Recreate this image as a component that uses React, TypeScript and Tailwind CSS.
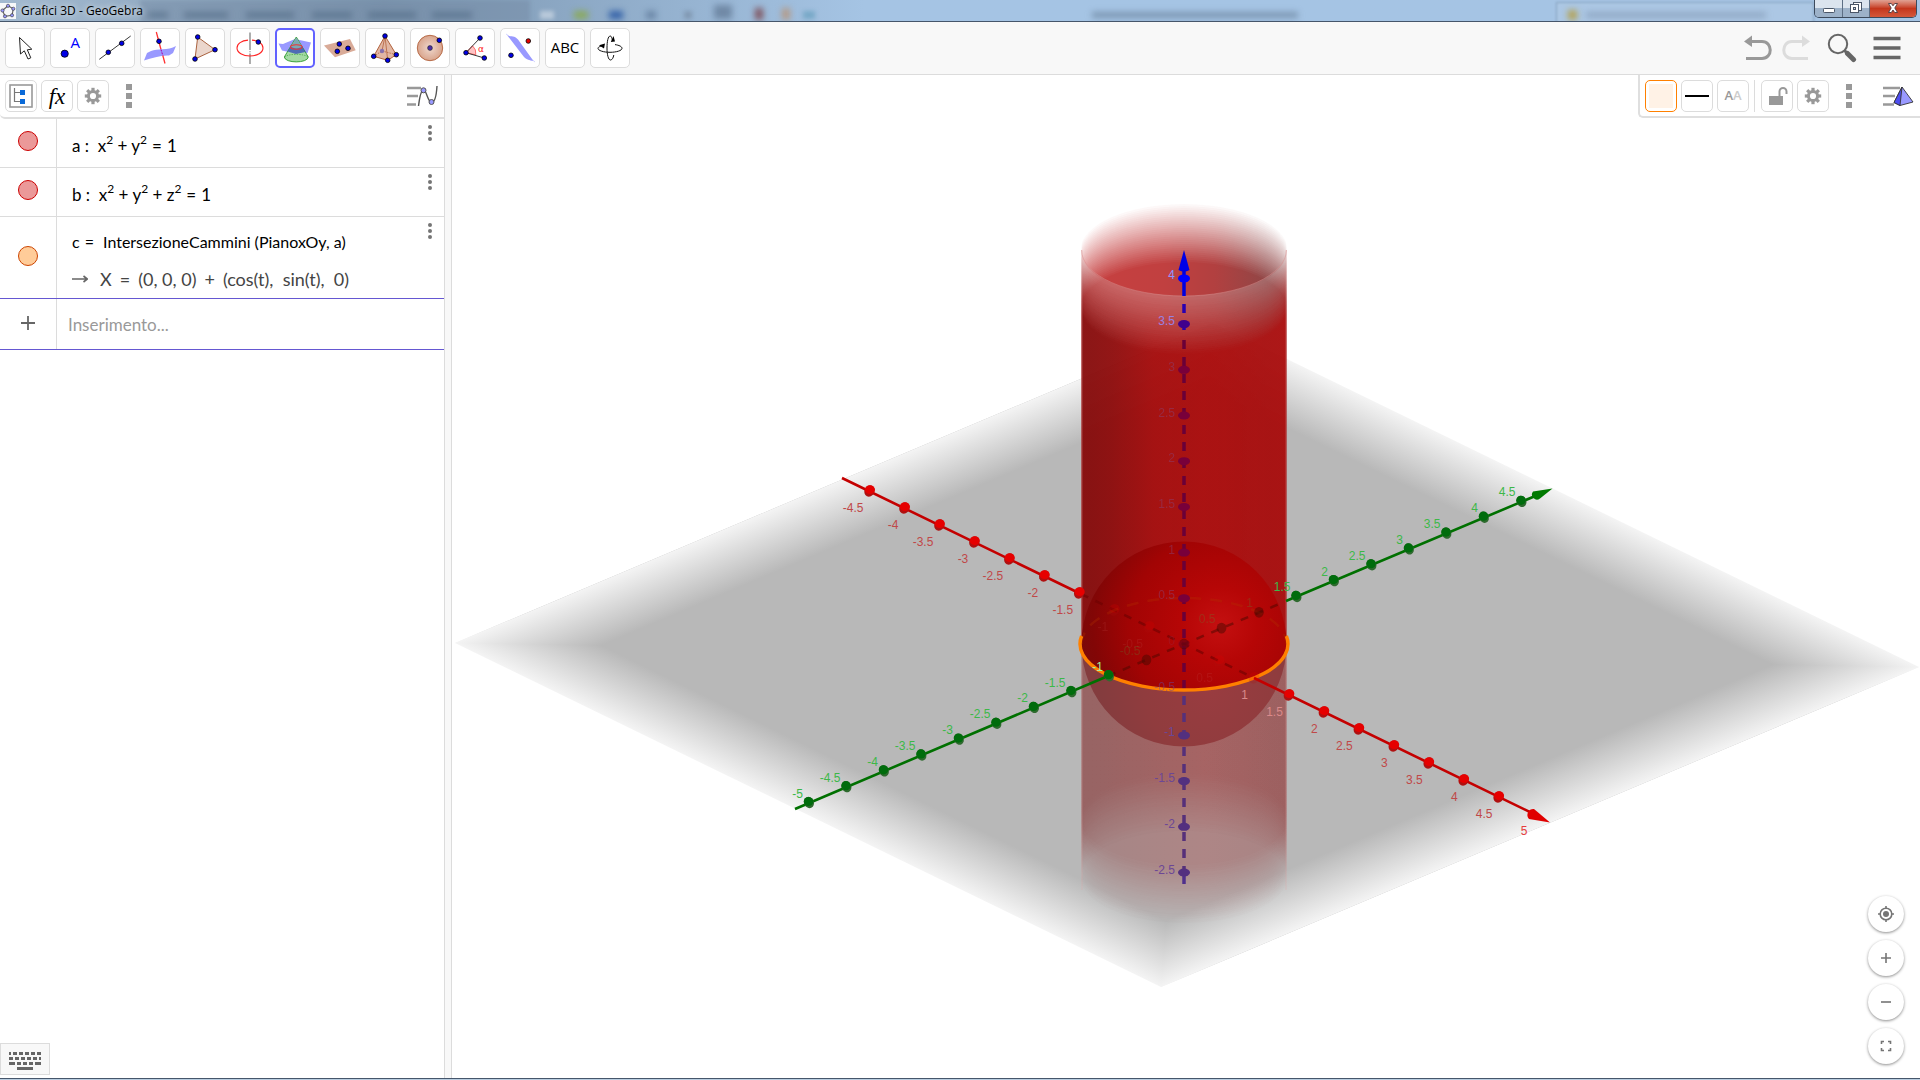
import type { ReactNode } from 'react';

const BLUE = '#0000e6';

function Dot({ x, y, fill = BLUE }: { x: number; y: number; fill?: string }) {
  return <circle cx={x} cy={y} r="2.3" fill={fill} stroke="#000" strokeWidth="0.8" />;
}

const tools: { name: string; icon: ReactNode; active?: boolean }[] = [
  {
    name: 'Muovi',
    icon: (
      <path
        d="M14.5 9.5 L15.5 26 L19.3 22.8 L23 31 L25.8 29.8 L22.3 21.8 L26.8 21.2 Z"
        fill="#fff"
        stroke="#222"
        strokeWidth="1"
      />
    ),
  },
  {
    name: 'Punto',
    icon: (
      <>
        <circle cx="14.7" cy="25.7" r="3.6" fill={BLUE} stroke="#000" strokeWidth="0.8" />
        <text x="20.5" y="20" fontSize="15" fill="#0000ff" fontFamily="Open Sans, sans-serif">
          A
        </text>
      </>
    ),
  },
  {
    name: 'Retta',
    icon: (
      <>
        <path d="M4.3 31.3 L35.7 8" stroke="#222" strokeWidth="0.9" />
        <Dot x={13.3} y={24.3} />
        <Dot x={26.7} y={15.3} />
      </>
    ),
  },
  {
    name: 'Retta perpendicolare',
    icon: (
      <>
        <path d="M16.3 4 L21 21.5" stroke="#f33" strokeWidth="1.3" />
        <path d="M11 23 C17 20 28 23 36 18 L33 25 L29 27.5 C21 27 12 30 4 32.5 L7 25 Z" fill="#9999ff" />
        <path d="M21 21.5 L22.8 27.5" stroke="#a0a" strokeWidth="1" strokeDasharray="2 1" />
        <path d="M22.8 27.5 L25 35.5" stroke="#f33" strokeWidth="1.3" />
        <Dot x={19} y={13.3} />
      </>
    ),
  },
  {
    name: 'Poligono',
    icon: (
      <>
        <path d="M12.7 9 L30 21.7 L10 31 Z" fill="#ebd6cc" stroke="#a0522d" strokeWidth="0.9" />
        <Dot x={12.7} y={9} />
        <Dot x={30} y={21.7} />
        <Dot x={10} y={31} />
      </>
    ),
  },
  {
    name: 'Circonferenza',
    icon: (
      <>
        <path d="M20 4.5 V19" stroke="#999" strokeWidth="1.6" />
        <path d="M20 19 V28" stroke="#999" strokeWidth="1.6" strokeDasharray="3 1.2 1 1.2" />
        <path d="M20 28 V36" stroke="#999" strokeWidth="1.6" />
        <path d="M22 12.1 C28.5 12.6 33 15.8 33 20 C33 24.6 27.2 28 20 28 C12.8 28 7 24.6 7 20 C7 15.8 11.5 12.6 18 12.1" stroke="#f22" strokeWidth="1.1" fill="none" />
        <Dot x={28.3} y={14} />
      </>
    ),
  },
  {
    name: 'Intersezione di due superfici',
    active: true,
    icon: (
      <>
        <path d="M3.5 15.5 L8 16 L20 11 L36 14.5 L32.5 25 L22 26 L7 22.5 Z" fill="#9999ff" />
        <path d="M21.3 9 L9.3 29 C10 35.5 32.6 35.5 33.3 29 Z" fill="#a4dba4" stroke="#2f9a2f" strokeWidth="0.9" />
        <path d="M16 18 L12.5 23.5 L21 26 L30.5 24 L26.8 18 Z" fill="#3f58b8" opacity="0.85" />
        <path d="M21.3 9.5 L15.8 18.6 C18 21 25 21 26.9 18.6 Z" fill="#7ba8b4" />
        <path d="M9.6 29 C13 25.5 29.6 25.5 33 29" stroke="#2f9a2f" strokeWidth="0.6" strokeDasharray="1.5 1" fill="none" />
        <ellipse cx="21.3" cy="19" rx="5.8" ry="2.2" stroke="#e33" strokeWidth="1.1" fill="none" />
      </>
    ),
  },
  {
    name: 'Piano per tre punti',
    icon: (
      <>
        <path d="M4 17.5 L30 11 L35.7 22.3 L15 29.3 Z" fill="#d9ab98" />
        <Dot x={19.3} y={16} />
        <Dot x={28} y={20.3} />
        <Dot x={17.3} y={23.3} />
      </>
    ),
  },
  {
    name: 'Piramide',
    icon: (
      <>
        <path d="M20 8 L8.7 28.3 L22.7 32.3 L31.3 26.7 Z" fill="#e2b7a3" stroke="#b2623d" strokeWidth="1" />
        <path d="M20 8 L22.7 32.3 M20 8 L17 23" stroke="#b2623d" strokeWidth="0.8" />
        <path d="M8.7 28.3 L17 23 L31.3 26.7" stroke="#b2623d" strokeWidth="0.8" strokeDasharray="1.5 1" fill="none" />
        <circle cx="17" cy="23" r="2.2" fill="#8770ad" />
        <Dot x={20} y={8} />
        <Dot x={8.7} y={28.3} />
        <Dot x={22.7} y={32.3} />
        <Dot x={31.3} y={26.7} />
      </>
    ),
  },
  {
    name: 'Sfera',
    icon: (
      <>
        <circle cx="20" cy="20" r="12.7" fill="url(#ball)" stroke="#b2623d" strokeWidth="0.9" />
        <circle cx="20" cy="20" r="2.4" fill="#4b2fa8" stroke="#222" strokeWidth="0.6" />
        <Dot x={29.3} y={12.3} />
      </>
    ),
  },
  {
    name: 'Angolo',
    icon: (
      <>
        <path d="M11 24.7 L17.5 17.8 A10 10 0 0 1 20.8 26.8 Z" fill="#ffc4c4" stroke="#f55" strokeWidth="0.8" />
        <path d="M25 10 L11 24.7 L29.3 30" stroke="#222" strokeWidth="0.9" fill="none" />
        <text x="23" y="24" fontSize="9" fill="#f22" fontFamily="DejaVu Sans, sans-serif">
          α
        </text>
        <Dot x={25} y={10} />
        <Dot x={11} y={24.7} />
        <Dot x={29.3} y={30} />
      </>
    ),
  },
  {
    name: 'Simmetria',
    icon: (
      <>
        <path d="M7 7 C11 9.5 14 7 18 11.5 L33.5 33 C29 32 27 32 24 29 Z" fill="#9999ff" />
        <path d="M6 6 L9 8 M32 31.5 L35 34" stroke="#c9c9ff" strokeWidth="0.8" />
        <Dot x={11} y={27.3} />
        <Dot x={28.3} y={13} fill="#e60000" />
      </>
    ),
  },
  {
    name: 'Testo',
    icon: (
      <text x="20" y="25.3" fontSize="15" textAnchor="middle" fill="#000" fontFamily="Open Sans, sans-serif">
        ABC
      </text>
    ),
  },
  {
    name: 'Ruota vista grafica 3D',
    icon: (
      <>
        <path d="M13.5 17.5 C9.5 18.3 8 19.3 8 20.3 C8 22.6 13.5 24.3 20 24.3 C26.5 24.3 32 22.6 32 20.3 C32 18.5 29 17.2 25 16.6" stroke="#111" strokeWidth="1" fill="none" />
        <path d="M22.5 13 C22 9.5 21.2 8 20.3 8 C18 8 17 13.5 17 20 C17 26.5 18.3 32 20.5 32 C22 32 23.3 30 23.8 27" stroke="#111" strokeWidth="1" fill="none" />
        <path d="M9 17.2 L15 15.5 L14 20.5 Z M20.8 14 L25 13.5 L23.5 8 Z" fill="#000" />
      </>
    ),
  },
];

function TitleBar() {
  const ghosts = [
    'left-[148px] w-[20px]',
    'left-[184px] w-[44px]',
    'left-[246px] w-[48px]',
    'left-[312px] w-[40px]',
    'left-[368px] w-[48px]',
    'left-[432px] w-[40px]',
  ];
  return (
    <header className="relative flex h-[22px] shrink-0 items-start overflow-hidden border-b border-[#46566b] bg-linear-to-r from-[#a3bad0] from-0% via-[#7d97b1] via-20% to-[#a5c4e4] to-45%">
      <div className="absolute inset-0" aria-hidden="true">
        <div className="absolute top-0 left-[140px] h-[22px] w-[390px] bg-[#738aa3]/50 blur-[2px]" />
        {ghosts.map((g) => (
          <div key={g} className={`absolute top-[12px] h-[6px] bg-[#4d6581]/60 blur-[3px] ${g}`} />
        ))}
        <div className="absolute top-[11px] left-[540px] h-[8px] w-[14px] bg-white/40 blur-[2px]" />
        <div className="absolute top-[11px] left-[574px] h-[8px] w-[14px] bg-[#8aa95c] blur-[3px]" />
        <div className="absolute top-[11px] left-[609px] h-[8px] w-[14px] bg-[#3462a8] blur-[3px]" />
        <div className="absolute top-[11px] left-[646px] h-[8px] w-[10px] bg-[#6a86a6] blur-[3px]" />
        <div className="absolute top-[11px] left-[684px] h-[8px] w-[8px] bg-[#8199b3] blur-[2px]" />
        <div className="absolute top-[5px] left-[714px] h-[14px] w-[18px] bg-[#7089a6] blur-[3px]" />
        <div className="absolute top-[8px] left-[755px] h-[12px] w-[8px] bg-[#7f5560] blur-[3px]" />
        <div className="absolute top-[8px] left-[782px] h-[12px] w-[8px] bg-[#b59a86] blur-[3px]" />
        <div className="absolute top-[11px] left-[803px] h-[8px] w-[12px] bg-[#79a9c8] blur-[2px]" />
        <div className="absolute top-[12px] left-[1092px] h-[6px] w-[206px] bg-[#5f7690]/60 blur-[3px]" />
        <div className="absolute top-[2px] left-[1556px] h-[30px] w-[258px] border border-[#7691ae]/70 bg-[#b6cde4]/40 blur-[1px]" />
        <div className="absolute top-[10px] left-[1568px] h-[10px] w-[9px] bg-[#b3a253] blur-[3px]" />
        <div className="absolute top-[12px] left-[1586px] h-[6px] w-[180px] bg-[#7d95b0]/60 blur-[3px]" />
      </div>
      <h1 className="relative flex items-center gap-[5px] pt-[2px] font-['Open_Sans',sans-serif] text-[12px] leading-[18px] text-black [text-shadow:0_0_6px_#fff]">
        <svg className="size-4 bg-white/90" viewBox="0 0 16 16" aria-hidden="true">
          <path d="M8 2.8 L13.3 5.8 L12 12.3 L5 13.3 L2.5 7.5 Z" fill="none" stroke="#666" strokeWidth="1.2" />
          {[[8, 2.8], [13.3, 5.8], [12, 12.3], [5, 13.3], [2.5, 7.5]].map(([x, y]) => (
            <circle key={x} cx={x} cy={y} r="1.6" fill="#9999ff" stroke="#333" strokeWidth="0.6" />
          ))}
        </svg>
        Grafici 3D - GeoGebra
      </h1>
      <div className="relative mr-[3px] ml-auto flex h-[18px] overflow-hidden rounded-b-[5px] border border-t-0 border-[#3c4a5c]">
        <button aria-label="Riduci a icona" className="flex w-[28px] justify-center border-r border-[#5d6f85] bg-linear-to-b from-[#dbe4ee] from-45% to-[#9db2c9] to-50%">
          <svg className="h-[17px] w-[14px]" viewBox="0 0 14 17">
            <rect x="1.5" y="8.5" width="11" height="4" rx="0.8" fill="#fff" stroke="#4a5668" />
          </svg>
        </button>
        <button aria-label="Ripristina" className="flex w-[27px] justify-center border-r border-[#5d6f85] bg-linear-to-b from-[#dbe4ee] from-45% to-[#9db2c9] to-50%">
          <svg className="h-[17px] w-[14px]" viewBox="0 0 14 17">
            <rect x="4.5" y="2.5" width="8" height="8" fill="#fff" stroke="#4a5668" />
            <rect x="1.5" y="4.5" width="8" height="8" fill="#fff" stroke="#4a5668" />
            <rect x="4.5" y="7.5" width="2" height="2" fill="#cdd8e4" stroke="#4a5668" />
          </svg>
        </button>
        <button aria-label="Chiudi" className="flex w-[46px] justify-center bg-linear-to-b from-[#e0a193] from-0% via-[#c4361c] via-50% to-[#d4573a]">
          <svg className="h-[17px] w-[14px]" viewBox="0 0 14 17">
            <path d="M2.5 3.5 H5.3 L7 5.8 L8.7 3.5 H11.5 L8.8 8 L11.5 12.5 H8.7 L7 10 L5.3 12.5 H2.5 L5.2 8 Z" fill="#fff" stroke="#4d3a40" strokeWidth="0.9" />
          </svg>
        </button>
      </div>
    </header>
  );
}

function Toolbar() {
  return (
    <nav className="flex h-[53px] shrink-0 items-center border-b border-[#dcdcdc] bg-[#f8f8f8] px-[5px]">
      <div className="flex gap-[5px]">
        {tools.map((t) => (
          <button
            key={t.name}
            aria-label={t.name}
            className={`flex size-10 items-center justify-center rounded-[5px] bg-white ${
              t.active ? 'border-2 border-[#6161ff]' : 'border border-[#dcdcdc]'
            }`}
          >
            <svg className="size-[38px] shrink-0" viewBox="1 1 38 38">
              {t.icon}
            </svg>
          </button>
        ))}
      </div>
      <div className="mr-[14px] ml-auto flex items-center gap-[8px]">
        <button aria-label="Annulla">
          <svg className="h-[28px] w-[30px]" viewBox="0 0 30 28" fill="none">
            <path d="M8 7.5 H19 C30 7.5 30 24.5 19 24.5 H3" stroke="#999" strokeWidth="3" />
            <path d="M1 7.5 L9 1.5 V13 Z" fill="#999" />
          </svg>
        </button>
        <button aria-label="Ripeti">
          <svg className="h-[28px] w-[30px]" viewBox="0 0 30 28" fill="none">
            <path d="M21 7.5 H11 C0 7.5 0 24.5 11 24.5 H27" stroke="#dcdcdc" strokeWidth="3" />
            <path d="M29 7.5 L21 1.5 V13 Z" fill="#dcdcdc" />
          </svg>
        </button>
        <button aria-label="Cerca" className="ml-2">
          <svg className="size-[30px]" viewBox="0 0 30 30" fill="none">
            <circle cx="11" cy="11" r="9.2" stroke="#666" strokeWidth="2" />
            <path d="M17.5 17.5 L21 21" stroke="#666" strokeWidth="3" />
            <path d="M20.5 20.5 L26.5 26.5" stroke="#666" strokeWidth="5" strokeLinecap="round" />
          </svg>
        </button>
        <button aria-label="Menu" className="ml-2">
          <svg className="h-[24px] w-[28px]" viewBox="0 0 28 24">
            <path d="M0.5 2.5 H27.5 M0.5 12 H27.5 M0.5 21.5 H27.5" stroke="#666" strokeWidth="3.4" />
          </svg>
        </button>
      </div>
    </nav>
  );
}

function StyleButton({ label, children, className = 'border-[#dcdcdc]' }: { label: string; children: ReactNode; className?: string }) {
  return (
    <button aria-label={label} className={`flex size-8 items-center justify-center rounded-[5px] border bg-white ${className}`}>
      {children}
    </button>
  );
}

function Gear() {
  return (
    <svg className="size-[18px]" viewBox="-9 -9 18 18">
      <circle r="4.6" fill="none" stroke="#999" strokeWidth="3" />
      {[0, 45, 90, 135, 180, 225, 270, 315].map((a) => (
        <rect key={a} x="-1.6" y="-8.2" width="3.2" height="3.4" fill="#999" transform={`rotate(${a})`} />
      ))}
    </svg>
  );
}

function MoreSquares() {
  return (
    <button aria-label="Altro" className="flex flex-col gap-[3px]">
      <span className="size-[6px] bg-[#999]" />
      <span className="size-[6px] bg-[#999]" />
      <span className="size-[6px] bg-[#999]" />
    </button>
  );
}

function AlgebraRow({ name, marble, children, tall }: { name: string; marble: string; children: ReactNode; tall?: boolean }) {
  return (
    <li className={`flex border-b ${tall ? 'h-[82px] border-[#6557d2]' : 'h-[49px] border-[#dcdcdc]'}`}>
      <div className={`flex w-[57px] shrink-0 justify-center border-r border-[#dcdcdc] ${tall ? 'items-center pb-[3px]' : 'pt-[12px]'}`}>
        <button aria-label={`Mostra ${name}`} className={`size-5 rounded-full border ${marble}`} />
      </div>
      <div className="flex grow flex-col pl-[15px] font-['Lato',sans-serif] text-[17px] text-black">{children}</div>
      <button aria-label={`Opzioni ${name}`} className="mt-[6px] mr-[12px] flex h-[16px] flex-col justify-between">
        <span className="size-1 rounded-full bg-[#757575]" />
        <span className="size-1 rounded-full bg-[#757575]" />
        <span className="size-1 rounded-full bg-[#757575]" />
      </button>
    </li>
  );
}

function Sq() {
  return <sup className="relative -top-[8px] text-[12px] leading-none">2</sup>;
}

function Eq() {
  return <span className="mx-[5px]">=</span>;
}

function AlgebraView() {
  return (
    <aside className="flex w-[445px] shrink-0 flex-col border-r border-[#dcdcdc] bg-white">
      <div className="flex h-[44px] shrink-0 items-center rounded-bl-[5px] border-b-2 border-[#dfdfdf] pr-[6px] pl-[5px]">
        <div className="flex gap-1">
          <StyleButton label="Oggetti ausiliari">
            <svg className="size-[24px]" viewBox="0 0 24 24" fill="none">
              <rect x="1" y="1" width="22" height="22" stroke="#999" strokeWidth="1.6" />
              <path d="M5.5 4 V17.5 H11 M5.5 8.5 H11" stroke="#777" strokeWidth="1.2" />
              <rect x="11" y="6" width="5" height="5" fill="#0a6ad8" />
              <rect x="11" y="15" width="5" height="5" fill="#0a6ad8" />
            </svg>
          </StyleButton>
          <StyleButton label="Funzione">
            <span className="font-['Liberation_Serif',serif] text-[23px] leading-none text-black italic">fx</span>
          </StyleButton>
          <StyleButton label="Impostazioni">
            <Gear />
          </StyleButton>
        </div>
        <div className="ml-[17px] flex">
          <MoreSquares />
        </div>
        <button aria-label="Vista Algebra" className="ml-auto">
          <svg className="h-[24px] w-[32px]" viewBox="0 0 32 24" fill="none">
            <path d="M1 4 H15 M1 12 H12 M1 20.5 H10" stroke="#999" strokeWidth="2.6" />
            <path d="M12.5 22 C14 10 15.5 6 17.5 6 C20.5 6 22 18.5 25.5 18.5 C29 18.5 30.5 10 31 2" stroke="#555" strokeWidth="1.4" />
            <circle cx="17.5" cy="6.3" r="2.5" fill="#9999ff" stroke="#555" />
            <circle cx="25.5" cy="18" r="2.5" fill="#9999ff" stroke="#555" />
          </svg>
        </button>
      </div>
      <ul>
        <AlgebraRow name="a" marble="border-[#cc0000] bg-[#eb9999]">
          <p className="pt-[15px] leading-[24px]">
            a :&nbsp; x<Sq /> + y<Sq />
            <Eq />1
          </p>
        </AlgebraRow>
        <AlgebraRow name="b" marble="border-[#cc0000] bg-[#eb9999]">
          <p className="pt-[15px] leading-[24px]">
            b :&nbsp; x<Sq /> + y<Sq /> + z<Sq />
            <Eq />1
          </p>
        </AlgebraRow>
        <AlgebraRow name="c" marble="border-[#cc4400] bg-[#ffcc99]" tall>
          <p className="pt-[13px] text-[16px] leading-[24px]">
            c<Eq /> IntersezioneCammini (PianoxOy, a)
          </p>
          <p className="flex items-center pt-[13px] text-[18px] leading-[24px] text-[#444]">
            <svg className="mr-[12px] h-[10px] w-[16px]" viewBox="0 0 16 10" fill="none" aria-hidden="true">
              <path d="M0 5 H15 M11.5 2 L15.3 5 L11.5 8" stroke="#666" strokeWidth="1.6" />
            </svg>
            X<span className="mx-[8px]">=</span>(0, 0, 0)<span className="mx-[8px]">+</span>(cos(t),&nbsp; sin(t),&nbsp; 0)
          </p>
        </AlgebraRow>
        <li className="flex h-[51px] border-b border-[#6557d2]">
          <div className="flex w-[57px] shrink-0 items-center justify-center border-r border-[#dcdcdc] pb-[2px]">
            <svg className="size-[14px]" viewBox="0 0 14 14" aria-hidden="true">
              <path d="M7 0 V14 M0 7 H14" stroke="#666" strokeWidth="1.8" />
            </svg>
          </div>
          <input
            aria-label="Inserimento"
            placeholder="Inserimento..."
            className="w-full grow pt-[2px] pl-[11px] font-['Lato',sans-serif] text-[17px] outline-none placeholder:text-[#999]"
          />
        </li>
      </ul>
      <button aria-label="Tastiera" className="mt-auto mb-[3px] flex h-[32px] w-[50px] items-center justify-center border border-[#dcdcdc] bg-[#f8f8f8] pt-[3px]">
        <svg className="h-[18px] w-[32px]" viewBox="0 0 32 18">
          <path d="M0 1.5 H32" stroke="#666" strokeWidth="3" strokeDasharray="2 2 4 2 4 2 4 2 4 2 4 0" />
          <path d="M0 6.5 H32" stroke="#666" strokeWidth="3" strokeDasharray="4 2 4 2 4 2 4 2 4 2 2 0" />
          <path d="M0 11.5 H32" stroke="#666" strokeWidth="3" strokeDasharray="6 2 4 2 4 2 4 2 6 0" />
          <path d="M8 16.5 H24" stroke="#666" strokeWidth="3" />
        </svg>
      </button>
    </aside>
  );
}

// Projection of the scene: origin, sphere radius and ellipse of the unit circle.
const O = { x: 1184, y: 644 };
const R = 102.5;
const RY = 46;
const X1 = O.x - R;
const X2 = O.x + R;
const STEPS = 30;
const levels = Array.from({ length: STEPS }, (_, i) => i);

const tickValues = (from: number, to: number) => {
  const out: number[] = [];
  for (let v = from; v <= to; v += 0.5) out.push(v);
  return out;
};

function MaskBand({ y, sweep, level }: { y: number; sweep: number; level: number }) {
  const g = Math.round(level * 255);
  return <path d={`M${X1 - 1} ${y} A${R + 1} ${RY} 0 0 ${sweep} ${X2 + 1} ${y} V960 H${X1 - 1} Z`} fill={`rgb(${g},${g},${g})`} />;
}

// The side of the cylinder fades along ellipses, 60 units deep at both ends.
function FadeMask({ id, front }: { id: string; front: boolean }) {
  const sweep = front ? 0 : 1;
  return (
    <mask id={id} maskUnits="userSpaceOnUse" x="1060" y="180" width="250" height="780">
      {levels.map((i) => (
        <MaskBand key={`t${i}`} y={250 + i * 2} sweep={sweep} level={(i + 1) / STEPS} />
      ))}
      {levels.map((i) => (
        <MaskBand key={`b${i}`} y={819 + i * 2} sweep={sweep} level={1 - (i + 1) / STEPS} />
      ))}
    </mask>
  );
}

function Label({ x, y, v, fill, opacity = 1 }: { x: number; y: number; v: number; fill: string; opacity?: number }) {
  return (
    <text x={x} y={y} textAnchor="end" fontSize="12" fontFamily="Liberation Sans, Arial, sans-serif" fill={fill} opacity={opacity}>
      {v}
    </text>
  );
}

function Scene() {
  const arc = `A${R} ${RY} 0 0 0 ${X2} ${O.y}`;
  const upper = `M${X1} 180 V${O.y} ${arc} V180 Z`;
  const lower = `M${X1} ${O.y} ${arc} V960 H${X1} Z`;
  const dome = `M${X1} ${O.y} ${arc} A${R} ${R} 0 0 0 ${X1} ${O.y} Z`;
  const bowl = `M${X1} ${O.y} ${arc} A${R} ${R} 0 0 1 ${X1} ${O.y} Z`;

  return (
    <svg className="absolute inset-0 h-full w-full" viewBox="452 75 1468 1003" fill="none" role="img" aria-label="Grafici 3D">
      <defs>
        <linearGradient id="edge-u" gradientUnits="userSpaceOnUse" x1="0" y1="0" x2="100" y2="0">
          <stop offset="0" stopColor="#f4f4f4" />
          <stop offset="0.1" stopColor="#b8b8b8" />
          <stop offset="0.9" stopColor="#b8b8b8" />
          <stop offset="1" stopColor="#f4f4f4" />
        </linearGradient>
        <linearGradient id="edge-v" gradientUnits="userSpaceOnUse" x1="0" y1="0" x2="0" y2="100">
          <stop offset="0" stopColor="#f4f4f4" />
          <stop offset="0.1" stopColor="#b8b8b8" />
          <stop offset="0.9" stopColor="#b8b8b8" />
          <stop offset="1" stopColor="#f4f4f4" />
        </linearGradient>
        <linearGradient id="back">
          <stop offset="0" stopColor="#b40000" />
          <stop offset="0.4" stopColor="#ac0000" />
          <stop offset="0.65" stopColor="#980000" />
          <stop offset="0.9" stopColor="#6c0808" />
        </linearGradient>
        <linearGradient id="front">
          <stop offset="0.05" stopColor="#7e0c0c" />
          <stop offset="0.15" stopColor="#860c0c" />
          <stop offset="0.35" stopColor="#a20c0c" />
          <stop offset="0.6" stopColor="#ac0c0c" />
          <stop offset="1" stopColor="#b40c0c" />
        </linearGradient>
        <linearGradient id="under">
          <stop offset="0.05" stopColor="#7d1c1c" />
          <stop offset="0.3" stopColor="#8a1c1c" />
          <stop offset="0.6" stopColor="#981c1c" />
          <stop offset="1" stopColor="#861616" />
        </linearGradient>
        <radialGradient id="dome" gradientUnits="userSpaceOnUse" cx="1220" cy="625" r="150">
          <stop offset="0" stopColor="#c41010" />
          <stop offset="0.25" stopColor="#b60606" />
          <stop offset="0.6" stopColor="#a20404" />
          <stop offset="0.85" stopColor="#820606" />
          <stop offset="1" stopColor="#780a0a" />
        </radialGradient>
        <radialGradient id="bowl" gradientUnits="userSpaceOnUse" cx="1210" cy="690" r="110">
          <stop offset="0" stopColor="#993c40" />
          <stop offset="0.6" stopColor="#903c3e" />
          <stop offset="1" stopColor="#843c3e" />
        </radialGradient>
        <FadeMask id="fade-front" front />
        <FadeMask id="fade-back" front={false} />
        <mask id="rim" maskUnits="userSpaceOnUse" x="1060" y="180" width="250" height="780">
          {levels.map((i) => (
            <MaskBand key={i} y={250 + i * 2} sweep={0} level={0.28 * (1 - (i + 1) / STEPS)} />
          ))}
        </mask>
      </defs>

      {/* base plane, fading over a tenth of its width along each side */}
      <g transform="matrix(7.58 -3.2 7.06 3.44 455 643)">
        <rect width="100" height="100" fill="url(#edge-u)" />
        <path d="M0 0 H100 L50 50 Z M0 100 H100 L50 50 Z" fill="url(#edge-v)" />
      </g>

      <g mask="url(#fade-back)">
        <path d={lower} fill="url(#under)" opacity="0.32" />
        <path d={upper} fill="url(#back)" opacity="0.75" />
      </g>
      <g mask="url(#fade-front)">
        <path d={lower} fill="url(#under)" opacity="0.32" />
      </g>
      <path d={bowl} fill="url(#bowl)" />
      <g mask="url(#fade-front)">
        <path d={upper} fill="url(#front)" opacity="0.8" />
      </g>
      <path d={upper} fill="#d8d0d0" mask="url(#rim)" />
      <path d={`M${X1 + 0.5} 250 V890 M${X2 - 0.5} 250 V890`} stroke="#e0a0a0" strokeOpacity="0.35" />
      <path d={`M${X1} 250 A${R} ${RY} 0 0 0 ${X2} 250`} stroke="#d89090" strokeOpacity="0.5" />
      <path d={dome} fill="url(#dome)" />

      {/* hidden parts of the axes */}
      <path d="M1184 304 V330" stroke="#2a00b0" strokeWidth="3.5" strokeDasharray="9 9" />
      <path d="M1184 340 V690" stroke="#6a0038" strokeWidth="3.5" strokeDasharray="9 8" />
      <path d="M1184 696 V870" stroke="#56307a" strokeWidth="3.5" strokeDasharray="9 8" />
      <path d="M1184 872 V884" stroke="#50308c" strokeWidth="3.5" />
      <path d="M1081 594 L1254 678" stroke="#6c0202" strokeOpacity="0.6" strokeWidth="2.5" strokeDasharray="8 8" />
      <path d="M1108 676 L1284 602" stroke="#4a0800" strokeOpacity="0.5" strokeWidth="2.5" strokeDasharray="8 8" />
      <path d={`M${X1} ${O.y} A${R} ${RY} 0 0 1 ${X2} ${O.y}`} stroke="#b43200" strokeOpacity="0.3" strokeWidth="2.5" strokeDasharray="12 9" />

      <path d="M1081.6 636 A104 46 0 1 0 1286.4 636" stroke="#ff8000" strokeWidth="3.4" />

      {/* x axis */}
      <path d="M842 478 L1081 594 M1254 678 L1536 815" stroke="#c40000" strokeWidth="2.6" />
      <path d="M1550 822.5 L1529 819 A6 6 0 0 1 1534 809 Z" fill="#e00000" />
      {tickValues(-4.5, 4.5).map((v) => {
        const x = O.x + v * 69.9;
        const y = O.y + v * 34;
        return (
          <g key={v} opacity={v >= -1 && v <= 1 ? 0.2 : 1}>
            <ellipse cx={x} cy={y} rx="5" ry="5.8" fill="#b01010" transform={`rotate(26 ${x} ${y})`} />
            <ellipse cx={x + 0.5} cy={y - 1.3} rx="5" ry="4.4" fill="#e60000" />
          </g>
        );
      })}
      {tickValues(-4.5, 5)
        .filter((v) => v !== 0)
        .map((v) => (
          <Label
            key={v}
            x={O.x + v * 69.9 - 6}
            y={O.y + v * 34 + 21}
            v={v}
            fill={v === 5 ? '#e63c3c' : v === 1 || v === 1.5 ? '#d98a8a' : '#c04848'}
            opacity={v < 1 && v > -1.5 ? 0.2 : 1}
          />
        ))}

      {/* y axis */}
      <path d="M795 809 L1108 676 M1286 601 L1540 494" stroke="#007000" strokeWidth="2.6" />
      <path d="M1552.5 488.5 L1540 498.5 A5 5 0 0 1 1533 491.5 Z" fill="#007a00" />
      {tickValues(-5, 4.5).map((v) => {
        const x = O.x + v * 75;
        const y = O.y - v * 31.7;
        if (v > -1 && v <= 1) {
          return <ellipse key={v} cx={x} cy={y} rx="4.8" ry="5.4" fill="#4a0800" opacity="0.5" />;
        }
        return (
          <g key={v}>
            <ellipse cx={x} cy={y} rx="4.8" ry="5.8" fill="#2f6a2f" transform={`rotate(-23 ${x} ${y})`} />
            <ellipse cx={x - 0.5} cy={y - 1} rx="4.8" ry="4.6" fill="#006c0c" />
          </g>
        );
      })}
      {tickValues(-5, 4.5)
        .filter((v) => v !== 0)
        .map((v) => (
          <Label
            key={v}
            x={O.x + v * 75 - 6}
            y={O.y - v * 31.7 - 5}
            v={v}
            fill={v === -1 ? '#a0f0a0' : '#3cb848'}
            opacity={v > -1 && v <= 1 ? 0.2 : 1}
          />
        ))}

      {/* z axis */}
      <path d="M1184 268 V296" stroke="#0000e0" strokeWidth="3.5" />
      <path d="M1184 250 L1189.5 270 Q1184 273 1178.5 270 Z" fill="#0000e6" />
      {tickValues(-2.5, 4).map((v) => {
        const y = O.y - v * 91.4;
        if (v === -0.5) return null;
        const fill = v === 4 ? '#0000ff' : v === 3.5 ? '#40008c' : v < 0 ? '#53307f' : '#78003a';
        return <ellipse key={v} cx={O.x} cy={y} rx="6" ry="4" fill={fill} opacity={v === 0 ? 0.3 : 1} />;
      })}
      {tickValues(-2.5, 4).map((v) => (
        <Label
          key={v}
          x={O.x - 9}
          y={O.y - v * 91.4 + 1}
          v={v}
          fill={v === 4 ? '#8c96ff' : v === 3.5 ? '#9a80e0' : v < 0 ? '#6c4796' : '#8c4070'}
          opacity={v >= 3.5 || v <= -1 ? 1 : v === 0 ? 0.2 : 0.5}
        />
      ))}
    </svg>
  );
}

function RoundButton({ label, children }: { label: string; children: ReactNode }) {
  return (
    <button aria-label={label} className="flex size-9 items-center justify-center rounded-full bg-white shadow-[0_1px_3px_rgba(0,0,0,0.45)]">
      <svg className="size-[18px]" viewBox="0 0 18 18" fill="none" stroke="#757575" strokeWidth="1.6">
        {children}
      </svg>
    </button>
  );
}

function Graphics3D() {
  return (
    <main className="relative grow overflow-hidden border-l border-[#dcdcdc] bg-white">
      <Scene />
      <div className="absolute top-0 right-0 flex h-[43px] items-center rounded-bl-[5px] border-b-2 border-l-2 border-[#dfdfdf] bg-white pr-[6px] pl-[5px]">
        <div className="flex gap-1">
          <StyleButton label="Colore" className="border-[#ff8000]">
            <span className="size-6 bg-[#fff2e6]" />
          </StyleButton>
          <StyleButton label="Stile linea">
            <span className="h-[2px] w-6 bg-black" />
          </StyleButton>
          <StyleButton label="Stile etichetta">
            <span className="font-['Open_Sans',sans-serif] text-[13px] font-semibold text-[#999]">
              A<span className="text-[#ccc]">A</span>
            </span>
          </StyleButton>
        </div>
        <div className="mr-[6px] ml-[5px] h-8 w-px bg-[#dcdcdc]" />
        <div className="flex gap-1">
          <StyleButton label="Blocca">
            <svg className="size-[22px]" viewBox="0 0 22 22" fill="none">
              <rect x="3" y="11" width="14" height="9" fill="#999" />
              <path d="M13.5 12 V6.5 A3.5 3.5 0 0 1 20.5 6.5 V9" stroke="#999" strokeWidth="2" />
            </svg>
          </StyleButton>
          <StyleButton label="Impostazioni">
            <Gear />
          </StyleButton>
        </div>
        <div className="mr-[30px] ml-[17px] flex">
          <MoreSquares />
        </div>
        <button aria-label="Vista Grafici 3D">
          <svg className="h-[24px] w-[32px]" viewBox="0 0 32 24" fill="none">
            <path d="M1 4 H18 M1 12 H13 M1 20.5 H12" stroke="#999" strokeWidth="2.6" />
            <path d="M20 3 L31 18 L18 21.5 L12 18.5 Z" fill="#9999ff" stroke="#333" strokeWidth="0.9" />
            <path d="M20 3 L18 21.5 L12 18.5 Z" fill="#4d4df0" stroke="#333" strokeWidth="0.9" />
          </svg>
        </button>
      </div>
      <div className="absolute right-[16px] bottom-[14px] flex flex-col gap-2">
        <RoundButton label="Vista standard">
          <circle cx="9" cy="9" r="5.8" />
          <circle cx="9" cy="9" r="3" fill="#757575" stroke="none" />
          <path d="M9 1 V3.5 M9 14.5 V17 M1 9 H3.5 M14.5 9 H17" />
        </RoundButton>
        <RoundButton label="Zoom avanti">
          <path d="M9 4 V14 M4 9 H14" />
        </RoundButton>
        <RoundButton label="Zoom indietro">
          <path d="M4 9 H14" />
        </RoundButton>
        <RoundButton label="Schermo intero">
          <path d="M4.5 7 V4.5 H7 M11 4.5 H13.5 V7 M13.5 11 V13.5 H11 M7 13.5 H4.5 V11" />
        </RoundButton>
      </div>
    </main>
  );
}

export default function App() {
  return (
    <div className="flex h-screen flex-col overflow-hidden bg-white">
      <svg className="absolute size-0" aria-hidden="true">
        <defs>
          <radialGradient id="ball">
            <stop offset="0" stopColor="#efd8ce" />
            <stop offset="1" stopColor="#d9a58d" />
          </radialGradient>
        </defs>
      </svg>
      <TitleBar />
      <Toolbar />
      <div className="flex min-h-0 grow bg-[#f8f8f8]">
        <AlgebraView />
        <div className="w-[6px] shrink-0" />
        <Graphics3D />
      </div>
      <div className="h-[2px] shrink-0 border-t border-[#46566b] bg-[#b9cde0]" />
    </div>
  );
}
